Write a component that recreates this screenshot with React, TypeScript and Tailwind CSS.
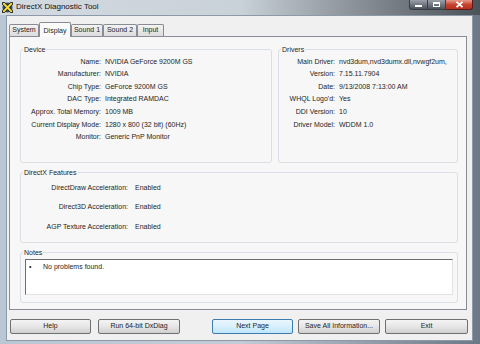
import React from 'react'

const deviceRows: [string, string][] = [
  ['Name:', 'NVIDIA GeForce 9200M GS'],
  ['Manufacturer:', 'NVIDIA'],
  ['Chip Type:', 'GeForce 9200M GS'],
  ['DAC Type:', 'Integrated RAMDAC'],
  ['Approx. Total Memory:', '1009 MB'],
  ['Current Display Mode:', '1280 x 800 (32 bit) (60Hz)'],
  ['Monitor:', 'Generic PnP Monitor'],
]

const driverRows: [string, string][] = [
  ['Main Driver:', 'nvd3dum,nvd3dumx.dll,nvwgf2um,'],
  ['Version:', '7.15.11.7904'],
  ['Date:', '9/13/2008 7:13:00 AM'],
  ['WHQL Logo\'d:', 'Yes'],
  ['DDI Version:', '10'],
  ['Driver Model:', 'WDDM 1.0'],
]

const featureRows: [string, string][] = [
  ['DirectDraw Acceleration:', 'Enabled'],
  ['Direct3D Acceleration:', 'Enabled'],
  ['AGP Texture Acceleration:', 'Enabled'],
]

const tabs = ['System', 'Display', 'Sound 1', 'Sound 2', 'Input']
const tabWidths = ['w-[30px]', 'w-[32px]', 'w-[32px]', 'w-[34px]', 'w-[27px]']

function InfoRows({ rows, labelW }: { rows: [string, string][]; labelW: string }) {
  return (
    <div className="flex flex-col pt-[1.5px]">
      {rows.map(([k, v]) => (
        <div key={k} className="flex h-[12.6px] items-center gap-[4px] whitespace-nowrap">
          <span className={`${labelW} shrink-0 text-right`}>{k}</span>
          <span>{v}</span>
        </div>
      ))}
    </div>
  )
}

function Group({ title, className, children }: { title: string; className: string; children: React.ReactNode }) {
  return (
    <fieldset className={`rounded-[3px] border border-[#d9dfe4] ${className}`}>
      <legend className="ml-[2px] px-[1px] leading-[9px]">{title}</legend>
      {children}
    </fieldset>
  )
}

function Btn({ label, primary, className }: { label: string; primary?: boolean; className: string }) {
  return (
    <div
      className={`flex h-[15px] items-center justify-center rounded-[2px] border ${
        primary
          ? 'border-[#3d7bad] bg-linear-to-b from-[#eaf6fd] via-[#d9f0fc] to-[#bee6fd]'
          : 'border-[#707070] bg-linear-to-b from-[#f4f4f4] via-[#e6e6e6] to-[#cfcfcf]'
      } ${className}`}
    >
      {label}
    </div>
  )
}

export default function App() {
  return (
    <div className="flex h-[344px] w-[480px] flex-col overflow-hidden bg-linear-to-r from-[#b9c6d3] via-[#c3ccd6] to-[#6d7886] font-['Liberation_Sans',Arial,sans-serif] text-[7px] text-[#1e1e1e]">
      {/* title bar */}
      <div className="flex h-[15px] shrink-0 bg-linear-to-r from-[#d3dae1] via-[#c9d1d9] to-[#4c5259]">
        <svg width="11" height="11" viewBox="0 0 11 11" className="ml-[2px] mt-[2px]">
          <circle cx="5.5" cy="5.5" r="5" fill="#3b4a6b" />
          <path d="M1.5 1.5 L9.5 9.5 M9.5 1.5 L1.5 9.5" stroke="#1a1a1a" strokeWidth="3.4" strokeLinecap="round" />
          <path d="M1.8 1.8 L9.2 9.2 M9.2 1.8 L1.8 9.2" stroke="#f2dc3a" strokeWidth="2" strokeLinecap="round" />
        </svg>
        <span className="ml-[3px] mt-[2px] text-[8px] leading-[9px] text-[#111]">DirectX Diagnostic Tool</span>
        <div className="ml-auto mr-[7px] flex h-[10px]">
          <div className="flex w-[19px] items-center justify-center rounded-bl-[3px] border border-t-0 border-[#3a3f46] bg-linear-to-b from-[#9aa1aa] to-[#4b525b]">
            <div className="mt-[2px] h-[2px] w-[7px] bg-white" />
          </div>
          <div className="flex w-[18px] items-center justify-center border-b border-r border-[#3a3f46] bg-linear-to-b from-[#9aa1aa] to-[#4b525b]">
            <div className="h-[5px] w-[7px] border border-t-2 border-white" />
          </div>
          <div className="flex w-[27px] items-center justify-center rounded-br-[3px] border-b border-r border-[#5a1d16] bg-linear-to-b from-[#e49a8a] via-[#c8432f] to-[#b8301f]">
            <svg width="9" height="7" viewBox="0 0 9 7">
              <path d="M1.5 0.8 L7.5 6.2 M7.5 0.8 L1.5 6.2" stroke="white" strokeWidth="1.8" />
            </svg>
          </div>
        </div>
      </div>

      {/* client area */}
      <div className="mb-[3px] ml-[6px] mr-[7px] flex flex-1 flex-col border border-[#8c99a8] bg-[#f0f0f0]">
        {/* tabs */}
        <div className="flex h-[20px] items-end pl-[3px]">
          {tabs.map((t, i) =>
            t === 'Display' ? (
              <div
                key={t}
                className={`relative z-10 -mb-px flex h-[15px] ${tabWidths[i]} items-start justify-center rounded-t-[2px] border border-b-0 border-[#898c95] bg-[#fbfbfb] pt-[3px]`}
              >
                {t}
              </div>
            ) : (
              <div
                key={t}
                className={`flex h-[12px] ${tabWidths[i]} items-center justify-center rounded-t-[2px] border border-b-0 border-[#898c95] bg-linear-to-b from-[#f3f3f3] to-[#dcdcdc] ${i === 0 ? 'ml-[-1px]' : ''}`}
              >
                {t}
              </div>
            ),
          )}
        </div>

        {/* tab page */}
        <div className="ml-[2px] mr-[5px] flex h-[274px] flex-col border border-[#898c95] bg-[#f7f7f7] pl-[10px] pr-[8px] pt-[8px]">
          <div className="flex h-[118px] gap-[6px]">
            <Group title="Device" className="w-[252px]">
              <InfoRows rows={deviceRows} labelW="w-[80px]" />
            </Group>
            <Group title="Drivers" className="flex-1">
              <InfoRows rows={driverRows} labelW="w-[56px]" />
            </Group>
          </div>

          <Group title="DirectX Features" className="mt-[5px] h-[75px]">
            <div className="flex flex-col pt-[1px]">
              {featureRows.map(([k, v]) => (
                <div key={k} className="flex h-[19.5px] items-center gap-[7px] whitespace-nowrap">
                  <span className="w-[107px] shrink-0 text-right">{k}</span>
                  <span>{v}</span>
                </div>
              ))}
            </div>
          </Group>

          <Group title="Notes" className="mt-[5px] h-[55px]">
            <div className="mx-[4px] mt-[2px] flex h-[36px] items-start border border-b-[#e3e3e3] border-l-[#6d6d6d] border-r-[#e3e3e3] border-t-[#6d6d6d] bg-white pl-[3px] pt-[2px]">
              <span className="w-[14px]">•</span>
              <span>No problems found.</span>
            </div>
          </Group>
        </div>

        {/* buttons */}
        <div className="mt-[9px] flex pl-[3px]">
          <Btn label="Help" className="w-[81px]" />
          <Btn label="Run 64-bit DxDiag" className="ml-[7px] w-[82px]" />
          <Btn label="Next Page" primary className="ml-[32px] w-[81px]" />
          <Btn label="Save All Information..." className="ml-[5px] w-[82px]" />
          <Btn label="Exit" className="ml-[5px] w-[83px]" />
        </div>
      </div>
    </div>
  )
}
